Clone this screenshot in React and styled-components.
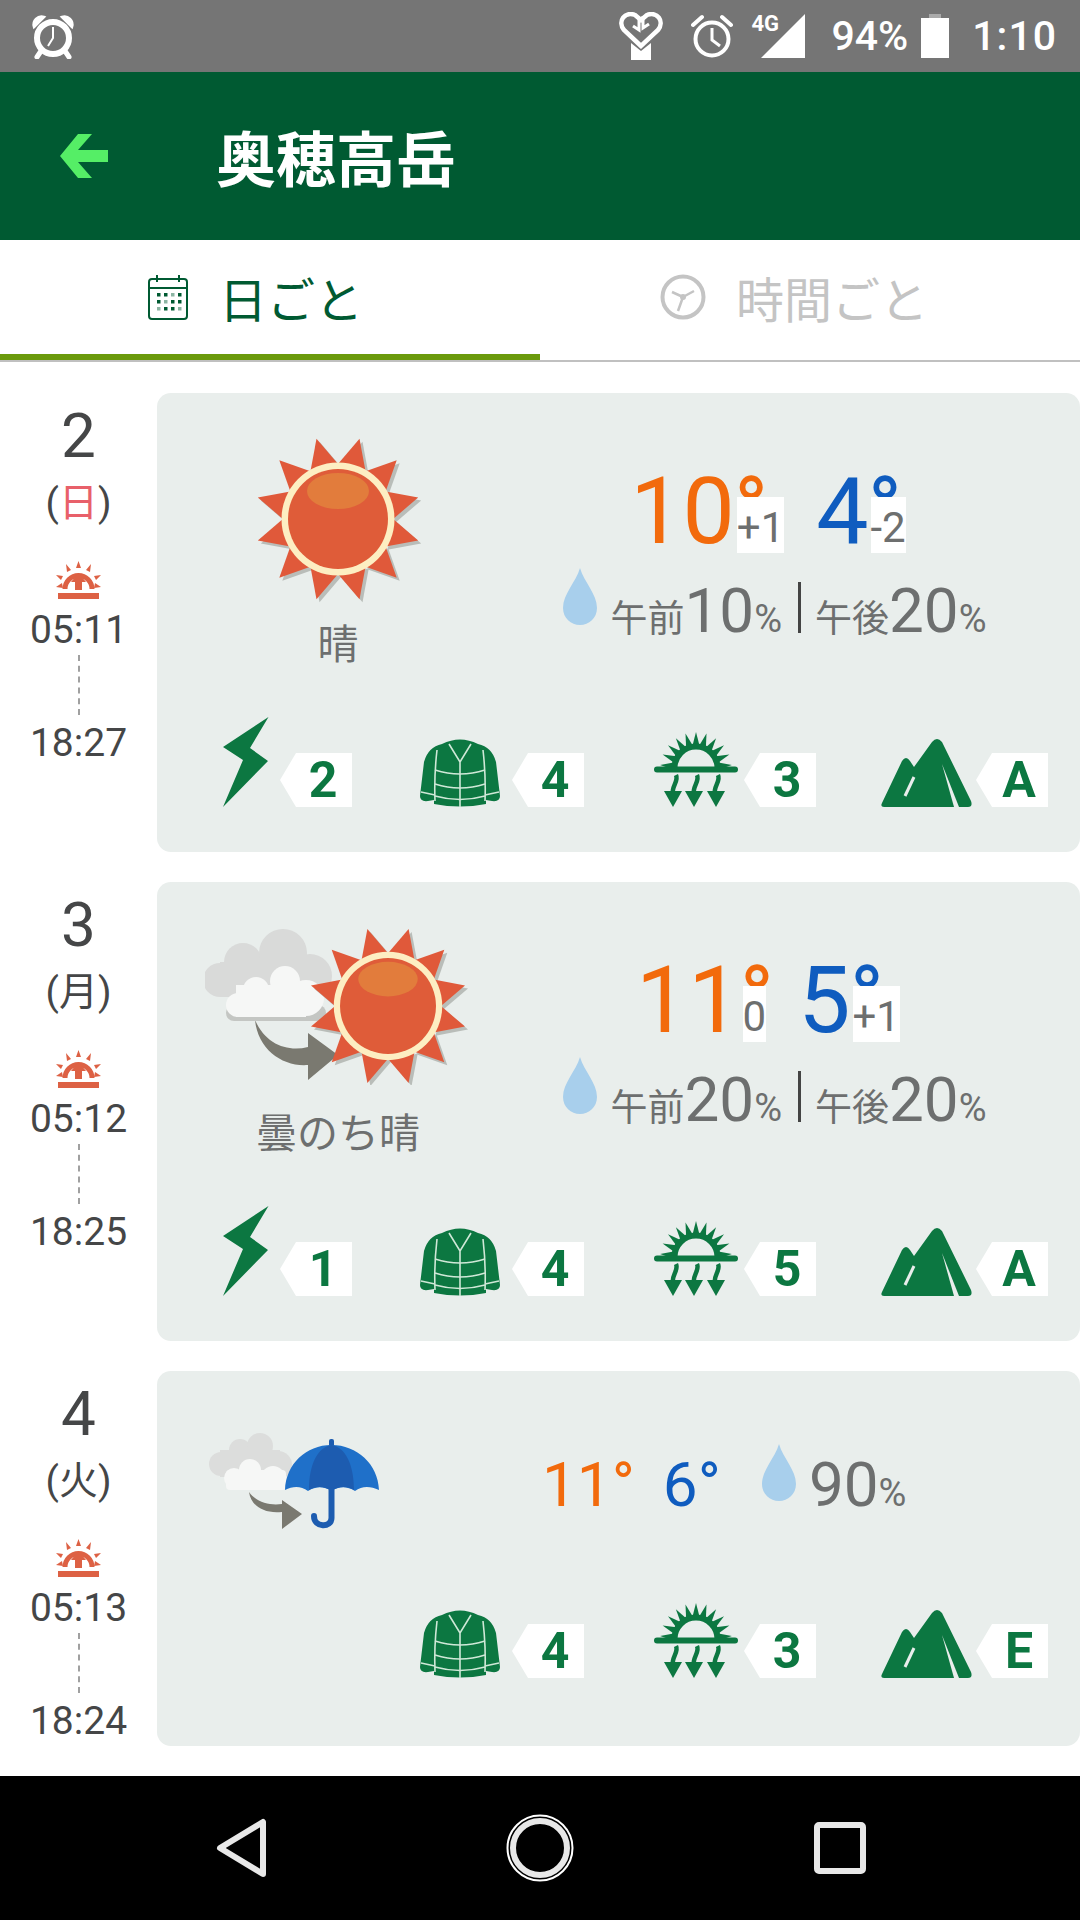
import React from "react";
import styled, { createGlobalStyle } from "styled-components";

const GREEN = "#0c7741";
const CARD = "#e9eeec";
const ORANGE = "#f26a0c";
const BLUE = "#0f5cbf";
const GREY = "#6d6f6f";
const INK = "#454647";

const GlobalStyle = createGlobalStyle`
  * { box-sizing: border-box; }
  html, body { margin: 0; padding: 0; background: #fff; }
  body { font-family: Roboto, "Noto Sans CJK JP", sans-serif; }
`;

const Page = styled.div`
  width: 1080px;
  height: 1920px;
  display: flex;
  flex-direction: column;
  overflow: hidden;
`;

const StatusBar = styled.div`
  height: 72px;
  background: #757575;
  color: #fff;
  display: flex;
  align-items: center;
  justify-content: space-between;
  padding: 0 23px 0 31px;
`;
const StatusRight = styled.div`
  display: flex;
  align-items: center;
`;
const StatusItem = styled.div`
  display: flex;
  align-items: center;
  margin-left: ${(p) => p.$gap}px;
`;
const StatusText = styled.span`
  font-size: 41px;
  line-height: 72px;
  color: #fff;
  font-weight: 500;
  letter-spacing: ${(p) => p.$track || 0}px;
`;
const SignalBox = styled.div`
  position: relative;
  width: 54px;
  height: 44px;
`;
const FourG = styled.span`
  position: absolute;
  left: 0;
  top: -2px;
  font-size: 22px;
  line-height: 24px;
  font-weight: 700;
  color: #fff;
`;

const Header = styled.header`
  height: 168px;
  background: #005a32;
  display: flex;
  align-items: center;
  padding-left: 60px;
`;
const Title = styled.h1`
  margin: 0 0 0 108px;
  font-family: "Noto Sans CJK JP", sans-serif;
  font-size: 60px;
  font-weight: 700;
  line-height: 1;
  color: #fff;
`;

const Tabs = styled.nav`
  height: 122px;
  display: flex;
  border-bottom: 2px solid #c0c0c0;
`;
const Tab = styled.div`
  width: 540px;
  display: flex;
  align-items: center;
  padding: 0 0 0 ${(p) => p.$pad}px;
  gap: ${(p) => p.$gap}px;
  height: 120px;
  border-bottom: 6px solid ${(p) => (p.$active ? "#6b9a0d" : "transparent")};
`;
const TabLabel = styled.span`
  font-family: "Noto Sans CJK JP", sans-serif;
  font-size: 48px;
  font-weight: 400;
  line-height: 1;
  color: ${(p) => (p.$active ? "#005a32" : "#c4c4c4")};
`;

const List = styled.main`
  flex: 1;
  display: flex;
  flex-direction: column;
  gap: 30px;
  padding-top: 31px;
`;
const DayRow = styled.section`
  display: grid;
  grid-template-columns: 157px 923px;
`;

const DateCol = styled.div`
  display: flex;
  flex-direction: column;
  align-items: center;
  padding-top: 12px;
  color: ${INK};
`;
const DayNum = styled.div`
  font-size: 62px;
  line-height: 1;
`;
const WeekDay = styled.div`
  margin-top: 12px;
  font-size: 39px;
  line-height: 48px;
`;
const Sunday = styled.span`
  color: #e8606a;
`;
const SunriseWrap = styled.div`
  margin-top: 34px;
  height: 38px;
`;
const TimeText = styled.div`
  margin-top: ${(p) => p.$top}px;
  font-size: 39px;
  line-height: 37px;
`;
const DashLine = styled.div`
  margin-top: 6px;
  height: 60px;
  border-left: 2px dashed #a0a0a0;
`;

const Card = styled.div`
  height: ${(p) => (p.$compact ? 375 : 459)}px;
  background: ${CARD};
  border-radius: 14px;
  display: flex;
  flex-direction: column;
  justify-content: space-between;
  padding: ${(p) => (p.$compact ? "62px 0 68px" : "44px 0 45px")};
`;
const Top = styled.div`
  display: flex;
  align-items: flex-start;
`;
const WeatherCol = styled.div`
  width: 362px;
  display: flex;
  flex-direction: column;
  align-items: center;
`;
const WeatherIcon = styled.div`
  height: 164px;
  display: flex;
  align-items: flex-start;
`;
const WeatherLabel = styled.div`
  margin-top: 15px;
  font-family: "Noto Sans CJK JP", sans-serif;
  font-size: 41px;
  line-height: 50px;
  color: ${GREY};
`;
const ForecastCol = styled.div`
  width: 506px;
  margin-top: 28px;
  display: flex;
  flex-direction: column;
  align-items: center;
`;
const TempRow = styled.div`
  display: flex;
  gap: 32px;
  margin-right: 8px;
`;
const Temp = styled.div`
  display: flex;
  color: ${(p) => p.$color};
  font-size: 93px;
  line-height: 1;
`;
const DegreeStack = styled.div`
  display: flex;
  flex-direction: column;
  align-items: flex-start;
`;
const Degree = styled.span`
  display: block;
  height: 32px;
  width: 26px;
  margin-left: -1px;
`;
const Delta = styled.span`
  display: block;
  height: 56px;
  margin-left: 2px;
  padding-top: 3px;
  background: #fff;
  color: ${GREY};
  font-size: 42px;
  line-height: 56px;
`;
const RainRow = styled.div`
  margin: 10px 0 0 6px;
  display: flex;
  align-items: flex-start;
`;
const RainText = styled.div`
  margin: 12px 0 0 13px;
  display: flex;
  align-items: baseline;
  color: ${GREY};
  line-height: 1;
`;
const RainLabel = styled.span`
  font-family: "Noto Sans CJK JP", sans-serif;
  font-size: 37px;
  line-height: 1;
`;
const RainValue = styled.span`
  font-size: 62px;
  line-height: 1;
`;
const RainUnit = styled.span`
  font-size: 38px;
  line-height: 1;
`;
const RainDivider = styled.span`
  align-self: flex-start;
  width: 3px;
  height: 51px;
  margin: 2px 14px 0 16px;
  background: #444;
`;

const CompactIcon = styled.div`
  margin-left: 52px;
  display: flex;
`;
const CompactTemps = styled.div`
  margin: 21px 0 0 163px;
  display: flex;
  gap: 28px;
  font-size: 62px;
  line-height: 1;
`;
const CompactTemp = styled.span`
  color: ${(p) => p.$color};
`;
const CompactDrop = styled.div`
  margin: 11px 0 0 41px;
  display: flex;
`;
const CompactRain = styled.div`
  margin: 21px 0 0 13px;
  display: flex;
  align-items: baseline;
  color: ${GREY};
`;

const IndexRow = styled.div`
  display: flex;
  justify-content: flex-end;
  padding-right: 32px;
`;
const IndexItem = styled.div`
  flex: none;
  width: 232px;
  display: flex;
  align-items: flex-end;
  justify-content: flex-end;
  gap: ${(p) => p.$gap}px;
`;
const Badge = styled.div`
  width: 72px;
  height: 54px;
  padding-left: 14px;
  display: flex;
  align-items: center;
  justify-content: center;
  background: #fff;
  color: ${GREEN};
  font-size: 50px;
  font-weight: 700;
  line-height: 1;
  clip-path: polygon(16px 0, 100% 0, 100% 100%, 16px 100%, 0 50%);
`;

const NavButtons = styled.div`
  height: 144px;
  background: #000;
  display: flex;
  align-items: center;
  padding-left: 215px;
`;
const NavSlot = styled.div`
  margin-left: ${(p) => p.$gap}px;
  display: flex;
`;

const AlarmFilled = () => (
  <svg width="44" height="46" viewBox="0 0 44 46">
    <path d="M3 14 L13 4 A8 8 0 0 0 3 14Z M41 14 L31 4 A8 8 0 0 1 41 14Z" fill="#fff" stroke="#fff" strokeWidth="2.5" />
    <circle cx="22" cy="25" r="16" fill="none" stroke="#fff" strokeWidth="6" />
    <path d="M22 14 V25 L17 33" fill="none" stroke="#fff" strokeWidth="2" />
    <path d="M10 38 L6 44 M34 38 L38 44" stroke="#fff" strokeWidth="5" strokeLinecap="round" />
  </svg>
);

const AlarmOutline = () => (
  <svg width="42" height="44" viewBox="0 0 42 44">
    <path d="M2 11 L11 3 M40 11 L31 3" stroke="#fff" strokeWidth="4" strokeLinecap="round" />
    <circle cx="21" cy="25" r="16.5" fill="none" stroke="#fff" strokeWidth="4" />
    <path d="M21 14 V26 L29 32" fill="none" stroke="#fff" strokeWidth="3" />
  </svg>
);

const HeartPhone = () => (
  <svg width="46" height="48" viewBox="0 0 46 48">
    <path d="M23 34 L6 18 C-1 9 7 -1 17 3 L23 8 L29 3 C39 -1 47 9 40 18 Z" fill="none" stroke="#fff" strokeWidth="4.5" />
    <path d="M21 6 V18 L15 14 M25 4 V16 L31 12" fill="none" stroke="#fff" strokeWidth="3" />
    <path d="M13 31 L23 39 L33 31 V48 H13Z" fill="#fff" />
  </svg>
);

const Battery = () => (
  <svg width="28" height="44" viewBox="0 0 28 44">
    <rect x="8" y="0" width="12" height="5" fill="#aaa" />
    <rect x="0" y="4" width="28" height="40" fill="#fff" />
  </svg>
);

const BackArrow = () => (
  <svg width="48" height="44" viewBox="0 0 48 44">
    <path d="M48 16 H18 L32 0 H18 L0 22 L18 44 H32 L18 28 H48Z" fill="#55ee66" />
  </svg>
);

const CalendarIcon = () => (
  <svg width="40" height="46" viewBox="0 0 40 46">
    <rect x="1" y="5" width="38" height="40" rx="3" fill="none" stroke="#005a32" strokeWidth="2" />
    <path d="M1 14 H39 M9 1 V8 M31 1 V8 M14 5 H26" stroke="#005a32" strokeWidth="2" fill="none" />
    {[19, 26, 33].map((y) =>
      [9, 16, 23, 30].map((x, i) => (
        <rect key={x + "-" + y} x={x} y={y} width="3.5" height="3.5" fill="#005a32" opacity={(i + y) % 3 === 0 ? 0.45 : 1} />
      ))
    )}
  </svg>
);

const ClockIcon = () => (
  <svg width="46" height="46" viewBox="0 0 46 46">
    <circle cx="23" cy="23" r="20.5" fill="none" stroke="#c4c4c4" strokeWidth="4" />
    <path d="M23 23 L34 17 M23 23 L12 18 M23 23 L18 37" stroke="#c4c4c4" strokeWidth="2.5" />
    <circle cx="23" cy="23" r="3" fill="#c4c4c4" />
  </svg>
);

const SunriseIcon = () => (
  <svg width="45" height="38" viewBox="0 0 45 38">
    <rect x="2" y="32" width="41" height="6" fill="#dd6144" />
    <path d="M9 28 A13.5 13.5 0 0 1 36 28" fill="none" stroke="#dd6144" strokeWidth="5" />
    <path d="M22.5 12 L30 21 H26 V29 H19 V21 H15Z" fill="#dd6144" />
    <path d="M22.5 0 L25 7 H20Z M10 3 L15 9 L11 11Z M35 3 L34 11 L30 9Z M0 14 L7 15 L5 19Z M45 14 L40 19 L38 15Z M0 26 L6 22 L7 27Z M45 26 L38 27 L39 22Z" fill="#dd6144" />
  </svg>
);

const spikes = Array.from({ length: 12 }, (_, i) => 15 + i * 30);

const polar = (cx, cy, r, deg) => {
  const a = (deg * Math.PI) / 180;
  return `${(cx + r * Math.sin(a)).toFixed(1)},${(cy - r * Math.cos(a)).toFixed(1)}`;
};

const SunShape = ({ cx, cy, k }) => (
  <g>
    {spikes.map((d) => (
      <polygon
        key={"s" + d}
        points={[polar(cx + 3, cy + 3, 83 * k, d), polar(cx + 3, cy + 3, 54 * k, d - 16), polar(cx + 3, cy + 3, 54 * k, d + 16)].join(" ")}
        fill="#b9bdb9"
      />
    ))}
    {spikes.map((d) => (
      <polygon
        key={"r" + d}
        points={[polar(cx, cy, 83 * k, d), polar(cx, cy, 54 * k, d - 16), polar(cx, cy, 54 * k, d + 16)].join(" ")}
        fill="#e0593a"
      />
    ))}
    <circle cx={cx} cy={cy} r={56.5 * k} fill="#fdeec2" />
    <circle cx={cx} cy={cy} r={50 * k} fill="#df5c39" />
    <ellipse cx={cx} cy={cy - 28 * k} rx={31 * k} ry={18 * k} fill="#e27c3c" />
  </g>
);

const SunIcon = () => (
  <svg width="168" height="166" viewBox="0 0 168 166">
    <SunShape cx={84} cy={82} k={1} />
  </svg>
);

const BackCloud = ({ c }) => (
  <g fill={c}>
    <circle cx="32" cy="80" r="17" />
    <circle cx="55" cy="62" r="19" />
    <circle cx="95" cy="53" r="24" />
    <circle cx="122" cy="76" r="22" />
    <rect x="32" y="62" width="90" height="35" />
  </g>
);

const FrontCloud = () => (
  <g>
    <rect x="38" y="105" width="100" height="16" rx="8" fill="#c4c6c3" />
    <g fill="#f6f7f6">
      <circle cx="50" cy="105" r="12" />
      <circle cx="68" cy="90" r="13" />
      <circle cx="97" cy="81" r="15" />
      <circle cx="118" cy="98" r="18" />
      <rect x="48" y="85" width="70" height="32" />
    </g>
  </g>
);

const CloudThenSun = () => (
  <svg width="267" height="159" viewBox="17 26 267 159">
    <BackCloud c="#d9dad9" />
    <path d="M67 120 C70 150 95 167 120 165 L120 180 L150 155 L120 133 L120 147 C100 152 78 145 67 120Z" fill="#7a7970" />
    <FrontCloud />
    <SunShape cx={200} cy={106} k={0.96} />
  </svg>
);

const CloudThenRain = () => (
  <svg width="170" height="97" viewBox="19 33 170 97">
    <g fill="#dcdddc">
      <circle cx="31" cy="64" r="12" />
      <circle cx="50" cy="50" r="11" />
      <circle cx="70" cy="46" r="13" />
      <circle cx="88" cy="65" r="14" />
      <rect x="30" y="50" width="60" height="27" />
    </g>
    <path d="M59 92 C61 106 74 114 92 112 L92 129 L112 114 L92 100 L92 104 C80 106 66 102 59 92Z" fill="#7a7970" />
    <g fill="#f6f7f6">
      <circle cx="44" cy="78" r="10" />
      <circle cx="60" cy="70" r="11" />
      <circle cx="83" cy="78" r="12" />
      <rect x="36" y="70" width="60" height="20" rx="4" />
    </g>
    <rect x="139" y="39" width="5" height="10" rx="2" fill="#1d5cb0" />
    <path d="M95 90 C96 64 116 45 141.5 45 C167 45 188 64 189 90 C180 86 172 86 165 91 C157 86 149 86 141.5 91 C134 86 126 86 118 91 C111 86 103 86 95 90Z" fill="#1f70c9" />
    <path d="M119 90 C119 64 128 47 141.5 45 C155 47 164 64 164 90 C157 86 149 86 141.5 91 C134 86 126 86 119 90Z" fill="#1d5cb0" />
    <path d="M141.5 90 V118 C141.5 128 124 128 124 116" fill="none" stroke="#1d5cb0" strokeWidth="6" strokeLinecap="round" />
  </svg>
);

const Drop = () => (
  <svg width="34" height="57" viewBox="0 0 34 57">
    <path d="M17 0 C21 14 34 26 34 40 C34 50 26 57 17 57 C8 57 0 50 0 40 C0 26 13 14 17 0Z" fill="#a8cfec" />
  </svg>
);

const Bolt = () => (
  <svg width="46" height="90" viewBox="0 0 46 90">
    <polygon points="45.5,0 0,30 20,43 0,90 45,44 27,31" fill={GREEN} />
  </svg>
);

const Jacket = () => (
  <svg width="80" height="69" viewBox="0 0 80 69">
    <path d="M22 6 Q40 -3 58 6 Q72 9 76 24 L80 58 Q80 64 72 63 L66 62 V66 Q40 71 14 66 V62 L8 63 Q0 64 0 58 L4 24 Q8 9 22 6Z" fill={GREEN} />
    <g fill="none" stroke="#cfe8d7" strokeWidth="1.6">
      <path d="M40 24 V69 M29 6 L40 24 L51 6" />
      <path d="M17 12 Q14 38 15 63 M63 12 Q66 38 65 63" />
      <path d="M15 32 Q40 40 65 32 M15 46 Q40 54 65 46 M15 58 Q40 65 65 58" />
      <path d="M1 54 L15 57 M79 54 L65 57" />
    </g>
  </svg>
);

const sunRays = [-85, -68, -51, -34, -17, 0, 17, 34, 51, 68, 85];

const UvSun = () => (
  <svg width="84" height="76" viewBox="0 0 84 76">
    {sunRays.map((d) => (
      <polygon key={d} points={[polar(42, 37, 36, d), polar(42, 37, 23, d - 8.5), polar(42, 37, 23, d + 8.5)].join(" ")} fill={GREEN} />
    ))}
    <path d="M20.5 37 A21.5 21.5 0 0 1 63.5 37" fill="none" stroke={GREEN} strokeWidth="6" />
    <rect x="0" y="35.5" width="84" height="6" rx="3" fill={GREEN} />
    <g fill="none" stroke={GREEN} strokeWidth="4.5">
      <path d="M22 44 C25 50 17 56 19 63" />
      <path d="M43 44 C46 50 38 56 40 63" />
      <path d="M64 44 C67 50 59 56 61 63" />
    </g>
    <path d="M10 60 H28 L19 76Z M31 60 H49 L40 76Z M53 60 H71 L62 76Z" fill={GREEN} />
  </svg>
);

const Mountain = () => (
  <svg width="91" height="69" viewBox="0 0 91 69">
    <path d="M51 4 Q56 -2 61 4 L90 63 Q92 69 87 69 H3 Q-1 69 1 65 L21 23 Q25 17 29 23 L33 29Z" fill={GREEN} />
    <path d="M24 58 L33 39" fill="none" stroke={CARD} strokeWidth="3" />
    <polygon points="61,26 78,69 73,69" fill={CARD} />
  </svg>
);

const indexIcons = {
  bolt: { Icon: Bolt, gap: 11 },
  jacket: { Icon: Jacket, gap: 12 },
  uv: { Icon: UvSun, gap: 6 },
  mountain: { Icon: Mountain, gap: 4 },
};

const Index = ({ kind, value }) => {
  const { Icon, gap } = indexIcons[kind];
  return (
    <IndexItem $gap={gap}>
      <Icon />
      <Badge>{value}</Badge>
    </IndexItem>
  );
};

const DateColumn = ({ day, week, rise, set, holiday }) => (
  <DateCol>
    <DayNum>{day}</DayNum>
    <WeekDay>
      ({holiday ? <Sunday>{week}</Sunday> : week})
    </WeekDay>
    <SunriseWrap>
      <SunriseIcon />
    </SunriseWrap>
    <TimeText $top={13}>{rise}</TimeText>
    <DashLine />
    <TimeText $top={10}>{set}</TimeText>
  </DateCol>
);

const TempBlock = ({ value, delta, color }) => (
  <Temp $color={color}>
    {value}
    <DegreeStack>
      <Degree>°</Degree>
      <Delta>{delta}</Delta>
    </DegreeStack>
  </Temp>
);

const days = [
  {
    day: "2", week: "日", holiday: true, rise: "05:11", set: "18:27",
    Icon: SunIcon, label: "晴",
    high: "10", highDelta: "+1", low: "4", lowDelta: "-2", am: "10", pm: "20",
    index: ["2", "4", "3", "A"],
  },
  {
    day: "3", week: "月", rise: "05:12", set: "18:25",
    Icon: CloudThenSun, label: "曇のち晴",
    high: "11", highDelta: "0", low: "5", lowDelta: "+1", am: "20", pm: "20",
    index: ["1", "4", "5", "A"],
  },
];

export default function App() {
  return (
    <Page>
      <GlobalStyle />
      <StatusBar>
        <AlarmFilled />
        <StatusRight>
          <HeartPhone />
          <StatusItem $gap={27}><AlarmOutline /></StatusItem>
          <StatusItem $gap={18}>
            <SignalBox>
              <FourG>4G</FourG>
              <svg width="54" height="44" viewBox="0 0 54 44">
                <polygon points="54,0 54,44 10,44" fill="#fff" />
              </svg>
            </SignalBox>
          </StatusItem>
          <StatusItem $gap={26}><StatusText>94%</StatusText></StatusItem>
          <StatusItem $gap={13}><Battery /></StatusItem>
          <StatusItem $gap={23}><StatusText $track={1}>1:10</StatusText></StatusItem>
        </StatusRight>
      </StatusBar>

      <Header>
        <BackArrow />
        <Title>奥穂高岳</Title>
      </Header>

      <Tabs>
        <Tab $active $pad={148} $gap={31}>
          <CalendarIcon />
          <TabLabel $active>日ごと</TabLabel>
        </Tab>
        <Tab $pad={120} $gap={30}>
          <ClockIcon />
          <TabLabel>時間ごと</TabLabel>
        </Tab>
      </Tabs>

      <List>
        {days.map((d) => (
          <DayRow key={d.day}>
            <DateColumn day={d.day} week={d.week} holiday={d.holiday} rise={d.rise} set={d.set} />
            <Card>
              <Top>
                <WeatherCol>
                  <WeatherIcon>
                    <d.Icon />
                  </WeatherIcon>
                  <WeatherLabel>{d.label}</WeatherLabel>
                </WeatherCol>
                <ForecastCol>
                  <TempRow>
                    <TempBlock value={d.high} delta={d.highDelta} color={ORANGE} />
                    <TempBlock value={d.low} delta={d.lowDelta} color={BLUE} />
                  </TempRow>
                  <RainRow>
                    <Drop />
                    <RainText>
                      <RainLabel>午前</RainLabel>
                      <RainValue>{d.am}</RainValue>
                      <RainUnit>%</RainUnit>
                      <RainDivider />
                      <RainLabel>午後</RainLabel>
                      <RainValue>{d.pm}</RainValue>
                      <RainUnit>%</RainUnit>
                    </RainText>
                  </RainRow>
                </ForecastCol>
              </Top>
              <IndexRow>
                <Index kind="bolt" value={d.index[0]} />
                <Index kind="jacket" value={d.index[1]} />
                <Index kind="uv" value={d.index[2]} />
                <Index kind="mountain" value={d.index[3]} />
              </IndexRow>
            </Card>
          </DayRow>
        ))}

        <DayRow>
          <DateColumn day="4" week="火" rise="05:13" set="18:24" />
          <Card $compact>
            <Top>
              <CompactIcon>
                <CloudThenRain />
              </CompactIcon>
              <CompactTemps>
                <CompactTemp $color={ORANGE}>11°</CompactTemp>
                <CompactTemp $color={BLUE}>6°</CompactTemp>
              </CompactTemps>
              <CompactDrop>
                <Drop />
              </CompactDrop>
              <CompactRain>
                <RainValue>90</RainValue>
                <RainUnit>%</RainUnit>
              </CompactRain>
            </Top>
            <IndexRow>
              <Index kind="jacket" value="4" />
              <Index kind="uv" value="3" />
              <Index kind="mountain" value="E" />
            </IndexRow>
          </Card>
        </DayRow>
      </List>

      <NavButtons>
        <NavSlot $gap={0}>
          <svg width="52" height="60" viewBox="0 0 52 60">
            <path d="M48 4 V56 L5 30Z" fill="none" stroke="#e8e8e8" strokeWidth="6" strokeLinejoin="round" />
          </svg>
        </NavSlot>
        <NavSlot $gap={239}>
          <svg width="68" height="68" viewBox="0 0 68 68">
            <circle cx="34" cy="34" r="32.5" fill="none" stroke="#fff" strokeWidth="2" />
            <circle cx="34" cy="34" r="27" fill="none" stroke="#e8e8e8" strokeWidth="6" />
          </svg>
        </NavSlot>
        <NavSlot $gap={240}>
          <svg width="52" height="52" viewBox="0 0 52 52">
            <rect x="3" y="3" width="46" height="46" rx="2" fill="none" stroke="#e8e8e8" strokeWidth="6" />
          </svg>
        </NavSlot>
      </NavButtons>
    </Page>
  );
}
